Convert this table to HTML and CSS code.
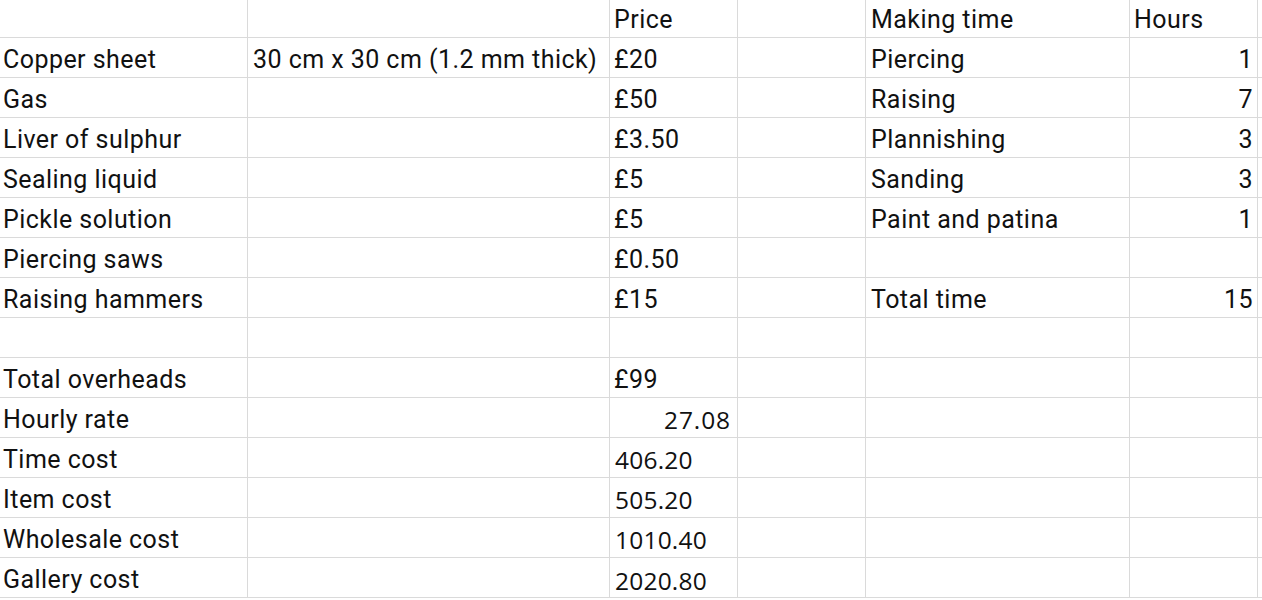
FILE: index.html
```html
<!DOCTYPE html>
<html>
<head>
<meta charset="utf-8">
<link rel="stylesheet" href="styles.css">
</head>
<body>
<div class="sheet">
  <div class="c"></div><div class="c"></div><div class="c">Price</div><div class="c"></div><div class="c">Making time</div><div class="c">Hours</div><div class="c e"></div>
  <div class="c">Copper sheet</div><div class="c">30 cm x 30 cm (1.2 mm thick)</div><div class="c">£20</div><div class="c"></div><div class="c">Piercing</div><div class="c r">1</div><div class="c e"></div>
  <div class="c">Gas</div><div class="c"></div><div class="c">£50</div><div class="c"></div><div class="c">Raising</div><div class="c r">7</div><div class="c e"></div>
  <div class="c">Liver of sulphur</div><div class="c"></div><div class="c">£3.50</div><div class="c"></div><div class="c">Plannishing</div><div class="c r">3</div><div class="c e"></div>
  <div class="c">Sealing liquid</div><div class="c"></div><div class="c">£5</div><div class="c"></div><div class="c">Sanding</div><div class="c r">3</div><div class="c e"></div>
  <div class="c">Pickle solution</div><div class="c"></div><div class="c">£5</div><div class="c"></div><div class="c">Paint and patina</div><div class="c r">1</div><div class="c e"></div>
  <div class="c">Piercing saws</div><div class="c"></div><div class="c">£0.50</div><div class="c"></div><div class="c"></div><div class="c"></div><div class="c e"></div>
  <div class="c">Raising hammers</div><div class="c"></div><div class="c">£15</div><div class="c"></div><div class="c">Total time</div><div class="c r">15</div><div class="c e"></div>
  <div class="c"></div><div class="c"></div><div class="c"></div><div class="c"></div><div class="c"></div><div class="c"></div><div class="c e"></div>
  <div class="c">Total overheads</div><div class="c"></div><div class="c">£99</div><div class="c"></div><div class="c"></div><div class="c"></div><div class="c e"></div>
  <div class="c">Hourly rate</div><div class="c"></div><div class="c r num rate">27.08</div><div class="c"></div><div class="c"></div><div class="c"></div><div class="c e"></div>
  <div class="c">Time cost</div><div class="c"></div><div class="c num">406.20</div><div class="c"></div><div class="c"></div><div class="c"></div><div class="c e"></div>
  <div class="c">Item cost</div><div class="c"></div><div class="c num">505.20</div><div class="c"></div><div class="c"></div><div class="c"></div><div class="c e"></div>
  <div class="c">Wholesale cost</div><div class="c"></div><div class="c num">1010.40</div><div class="c"></div><div class="c"></div><div class="c"></div><div class="c e"></div>
  <div class="c">Gallery cost</div><div class="c"></div><div class="c num low">2020.80</div><div class="c"></div><div class="c"></div><div class="c"></div><div class="c e"></div>
</div>
</body>
</html>
```
FILE: styles.css
```css
html, body {
  margin: 0;
  padding: 0;
  background: #ffffff;
}
body {
  font-family: Roboto, "Liberation Sans", sans-serif;
  color: #111111;
  overflow: hidden;
}
.sheet {
  display: grid;
  grid-template-columns: 248px 362px 128px 128px 264px 128px 1fr;
  grid-template-rows: 38px repeat(14, 40px);
}
.c {
  box-sizing: border-box;
  border-right: 1px solid #dadada;
  border-bottom: 1px solid #dadada;
  font-size: 25px;
  letter-spacing: 0.45px;
  line-height: 28px;
  padding: 0 4px 3px 4px;
  display: flex;
  align-items: flex-end;
  white-space: nowrap;
  overflow: visible;
}
.sheet > .c:nth-child(7n+1) {
  padding-left: 3px;
}
.sheet > .c:nth-child(7n+2),
.sheet > .c:nth-child(7n+5) {
  padding-left: 5px;
}
.c.e {
  border-right: none;
}
.c.r {
  justify-content: flex-end;
}
.c.num {
  font-family: "Open Sans", "Liberation Sans", sans-serif;
  font-size: 24.5px;
  letter-spacing: 0.2px;
  padding-left: 5px;
  padding-right: 6px;
}
.c.rate {
  letter-spacing: 0.9px;
}
.c.low {
  padding-bottom: 2px;
}
```
